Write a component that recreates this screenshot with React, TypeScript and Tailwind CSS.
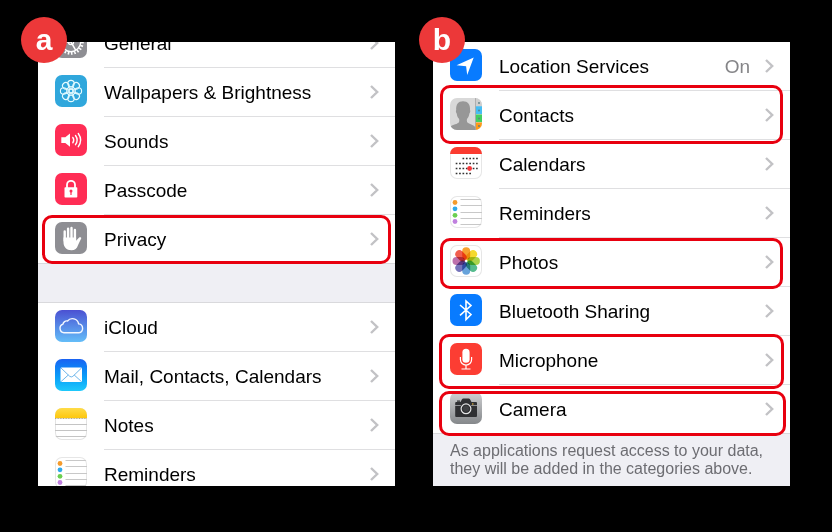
import type { ReactNode } from "react";

type Item = {
  label: string;
  icon: ReactNode;
  value?: string;
  highlight?: string;
};

function Tile({ className, children }: { className: string; children?: ReactNode }) {
  return (
    <span className={`block size-8 shrink-0 overflow-hidden rounded-[7px] ${className}`}>
      <svg viewBox="0 0 32 32" className="block size-full" aria-hidden="true">
        {children}
      </svg>
    </span>
  );
}

const eighths = [0, 45, 90, 135, 180, 225, 270, 315];

function GearIcon() {
  return (
    <Tile className="bg-[#8e8e93]">
      <g fill="none" stroke="#fff">
        <circle cx="16" cy="16" r="11.4" strokeWidth="2.8" strokeDasharray="1.500 1.755" />
        <circle cx="16" cy="16" r="9.700" strokeWidth="1.400" />
        <path d="M16 16h-9.500M16 16l4.800-8.300M16 16l4.800 8.300" strokeWidth="1.500" />
        <circle cx="16" cy="16" r="2.600" strokeWidth="1.200" />
      </g>
    </Tile>
  );
}

function WallpaperIcon() {
  return (
    <Tile className="bg-[#30a7dc]">
      <g fill="none" stroke="#e4fbff" strokeWidth="1.1">
        {eighths.map((a) => (
          <g key={a} transform={`rotate(${a} 16 16)`}>
            <circle cx="16" cy="8.600" r="3.200" />
            <path d="M16 14.200l-1.700-3M16 14.200l1.700-3" strokeWidth="0.900" />
          </g>
        ))}
        <circle cx="16" cy="16" r="1.900" />
      </g>
    </Tile>
  );
}

function SoundsIcon() {
  return (
    <Tile className="bg-[#ff2d55]">
      <path d="M6.300 13.200h4L15 9.500v13.200l-4.700-3.700h-4z" fill="#fff" />
      <g fill="none" stroke="#fff" strokeLinecap="round">
        <path d="M17.800 13.400q1.900 2.700 0 5.400" strokeWidth="1.400" />
        <path d="M20.500 11.500q3.300 4.600 0 9.200" strokeWidth="1.400" />
        <path d="M23.300 9.500q4.700 6.600 0 13.200" strokeWidth="1.400" />
      </g>
    </Tile>
  );
}

function PasscodeIcon() {
  return (
    <Tile className="bg-[#ff2d55]">
      <path d="M12 15v-3.200a4 4 0 0 1 8 0V15" fill="none" stroke="#fff" strokeWidth="1.800" />
      <rect x="9.500" y="14.300" width="12.800" height="10.300" rx="0.800" fill="#fff" />
      <circle cx="16" cy="18" r="1.500" fill="#ff2d55" />
      <path d="M15.400 18h1.200v4h-1.200z" fill="#ff2d55" />
    </Tile>
  );
}

function HandIcon() {
  return (
    <Tile className="bg-[#8e8e93]">
      <g stroke="#fff" strokeLinecap="round" fill="none">
        <path d="M9.700 9.500v9M13.100 6.800V17M16.500 6v11M19.900 8v10" strokeWidth="2.400" />
      </g>
      <path
        d="M8.500 15.500h12.600v3.300l2.800-3.100c1-1 2.700-.4 2.300.8-.9 2.200-2.200 4.200-3.200 6.700-1.100 3.200-3 5-6.600 5-4.900 0-7.900-3.400-7.900-8z"
        fill="#fff"
      />
    </Tile>
  );
}

function CloudIcon() {
  return (
    <Tile className="bg-linear-to-b from-[#4b50d2] to-[#64bdf8]">
      <path
        d="M9 22.800a4.500 4.500 0 0 1-1-8.700 3.700 3.700 0 0 1 4.500-3.100 6.300 6.300 0 0 1 11.100 2.900 4.500 4.500 0 0 1 .3 8.900z"
        fill="none"
        stroke="#f2f7ff"
        strokeWidth="1.400"
      />
    </Tile>
  );
}

function MailIcon() {
  return (
    <Tile className="bg-linear-to-b from-[#1a62f2] to-[#1fc9fb]">
      <rect x="5.500" y="8.500" width="21.500" height="14.500" rx="1.200" fill="#fff" />
      <g fill="none" stroke="#5eaee8" strokeWidth="0.900">
        <path d="M6 9l8.700 8.300q1.600 1.300 3.200 0L26.500 9" />
        <path d="M6 22.600l7.300-6.600M26.500 22.600L19.200 16" />
      </g>
    </Tile>
  );
}

function NotesIcon() {
  return (
    <Tile className="bg-white shadow-[inset_0_0_0_1px_#e3e3e3]">
      <defs>
        <linearGradient id="notes-band" x2="0" y2="1">
          <stop offset="0" stopColor="#ffdc48" />
          <stop offset="1" stopColor="#fdc70e" />
        </linearGradient>
      </defs>
      <path d="M0 0h32v10H0z" fill="url(#notes-band)" />
      <path d="M0 10.500h32" stroke="#b5a97e" strokeDasharray="1 0.600" />
      <path d="M0 16.500h32M0 22.500h32M0 28.500h32" stroke="#c4c4c4" />
    </Tile>
  );
}

function RemindersIcon() {
  return (
    <Tile className="bg-white shadow-[inset_0_0_0_1px_#e6e6e6]">
      <path d="M10.500 3.500H32M10.500 9.500H32M10.500 16.500H32M10.500 22.500H32M10.500 28.500H32" stroke="#c8c8c8" />
      <circle cx="5" cy="6.500" r="2.400" fill="#f49b2c" />
      <circle cx="5" cy="12.800" r="2.400" fill="#30a9ea" />
      <circle cx="5" cy="19.300" r="2.400" fill="#6bcf50" />
      <circle cx="5" cy="25.500" r="2.400" fill="#c080df" />
    </Tile>
  );
}

function LocationIcon() {
  return (
    <Tile className="bg-[#087bff]">
      <path d="M23.700 8.600L17.200 26l-1.100-8.700-9.500-1z" fill="#fff" />
    </Tile>
  );
}

function ContactsIcon() {
  return (
    <Tile className="bg-[#d9d9d9]">
      <path d="M25.500 0H32v8h-6.500z" fill="#cfcfcf" />
      <path d="M25.500 8.300H32v7.700h-6.500z" fill="#45bdf3" />
      <path d="M25.500 16.500H32V24h-6.500z" fill="#42cf61" />
      <path d="M25.500 24.500H32V32h-6.500z" fill="#ff9a17" />
      <path d="M25.500 0v32" stroke="#a5a5a5" strokeWidth="0.800" />
      <g fill="#5d7f82">
        <circle cx="29" cy="5" r="0.900" />
        <circle cx="29" cy="12.500" r="0.900" />
        <circle cx="29" cy="20.500" r="0.900" />
        <circle cx="29" cy="28" r="0.900" />
      </g>
      <path
        d="M0 32v-2.600c1.200-2.600 6.300-2.900 8.500-4.700.9-.8 1-2.600.5-4-1.400-1.300-2-3-2.200-5-.9-1-1.200-2.700-.6-3.600C5.800 6.500 8.300 3.200 13 3.200s7.500 3.100 7 8.800c.6 1 .2 2.700-.7 3.700-.2 2-.9 3.700-2.200 5-.5 1.400-.3 3.200.6 4 2.200 1.700 6.400 2 7.600 4.500V32z"
        fill="#979797"
      />
    </Tile>
  );
}

function CalendarIcon() {
  return (
    <Tile className="bg-white shadow-[inset_0_0_0_1px_#e6e6e6]">
      <path d="M0 0h32v7H0z" fill="#fb3b30" />
      <g stroke="#333" strokeWidth="1.700" strokeDasharray="1.700 1.700">
        <path d="M12.500 11.500h15.300" />
        <path d="M5.700 16.500h22" />
        <path d="M5.700 21.500h22" />
        <path d="M5.700 26.500h15.300" />
      </g>
      <circle cx="19.600" cy="21.500" r="2.400" fill="#f5383a" />
    </Tile>
  );
}

const petals = ["#f79a1e", "#f3d61c", "#a4cf3a", "#46b583", "#5a9bd8", "#6a68b5", "#b865a5", "#f0503f"];

function PhotosIcon() {
  return (
    <Tile className="bg-white shadow-[inset_0_0_0_1px_#e6e6e6]">
      {petals.map((fill, i) => (
        <rect
          key={fill}
          x="12.200"
          y="2.300"
          width="8"
          height="12.500"
          rx="4"
          fill={fill}
          className="mix-blend-multiply"
          opacity="0.920"
          transform={`rotate(${i * 45} 16.200 16)`}
        />
      ))}
    </Tile>
  );
}

function BluetoothIcon() {
  return (
    <Tile className="bg-[#087bff]">
      <path d="M10 11l11 9.500-5 5V7l5 4.600L10 21.300" fill="none" stroke="#fff" strokeWidth="1.600" />
    </Tile>
  );
}

function MicrophoneIcon() {
  return (
    <Tile className="bg-[#fc3d33]">
      <rect x="12.400" y="5.800" width="7.200" height="14" rx="3.600" fill="#fff" />
      <path d="M10.400 14v2.500a5.600 5.600 0 0 0 11.200 0V14M16 22.200v3.500M11.500 26h9" fill="none" stroke="#fff" strokeWidth="1.200" />
    </Tile>
  );
}

function CameraIcon() {
  return (
    <Tile className="bg-linear-to-b from-[#d0d1d3] to-[#85888b]">
      <g transform="translate(0 2)">
        <path d="M7 6.500h3v1.200H7z" fill="#2f3033" />
        <path d="M5.200 9q0-1 1-1h4.300l1.500-2.700q.5-.8 1.300-.8h5.400q.9 0 1.300.8L21.500 8H26q1 0 1 1v2H5.200z" fill="#2f3033" />
        <path d="M5.200 11.800H27V22q0 1-1 1H6.200q-1 0-1-1z" fill="#2f3033" />
        <circle cx="16" cy="14.800" r="6.200" fill="#2f3033" />
        <circle cx="16" cy="14.800" r="4.900" fill="none" stroke="#e4e5e6" strokeWidth="1.200" />
        <circle cx="16" cy="14.800" r="3" fill="#3f4144" />
        <circle cx="22.800" cy="10" r="0.800" fill="#e8b53a" />
      </g>
    </Tile>
  );
}

function Chevron() {
  return (
    <svg viewBox="0 0 9 14" className="h-3.5 w-[9px] shrink-0" aria-hidden="true">
      <path d="M1 1l6.200 6L1 13" fill="none" stroke="#c2c2c5" strokeWidth="2.400" />
    </svg>
  );
}

function Row({ item, last }: { item: Item; last: boolean }) {
  return (
    <li className="relative">
      <button
        type="button"
        className={`flex h-[49px] w-full items-start gap-[17px] pl-[17px] text-left ${last ? "border-b border-[#d9d9dc]" : ""}`}
      >
        <span className="pt-[7px]">{item.icon}</span>
        <span
          className={`flex min-w-0 flex-1 items-center self-stretch pr-4 ${last ? "" : "border-b border-[#dfdfe1]"}`}
        >
          <span className="flex-1 truncate pt-0.5 text-[19px] leading-7 text-black">{item.label}</span>
          {item.value && <span className="mr-[15px] pt-0.5 text-[19px] leading-7 text-[#858588]">{item.value}</span>}
          <Chevron />
        </span>
      </button>
      {item.highlight && (
        <span
          className={`pointer-events-none absolute z-10 rounded-[10px] border-3 border-[#e8000f] ${item.highlight}`}
        />
      )}
    </li>
  );
}

function Group({ items, open = false }: { items: Item[]; open?: boolean }) {
  return (
    <ul className="bg-white">
      {items.map((item, i) => (
        <Row key={item.label} item={item} last={!open && i === items.length - 1} />
      ))}
    </ul>
  );
}

function Badge({ children }: { children: string }) {
  return (
    <span className="absolute -top-[25px] z-20 flex size-[46px] items-center justify-center rounded-full bg-[#ec3839] text-[30px] leading-none font-bold text-white">
      {children}
    </span>
  );
}

const general: Item[] = [
  { label: "General", icon: <GearIcon /> },
  { label: "Wallpapers & Brightness", icon: <WallpaperIcon /> },
  { label: "Sounds", icon: <SoundsIcon /> },
  { label: "Passcode", icon: <PasscodeIcon /> },
  { label: "Privacy", icon: <HandIcon />, highlight: "inset-x-1 inset-y-0" },
];

const accounts: Item[] = [
  { label: "iCloud", icon: <CloudIcon /> },
  { label: "Mail, Contacts, Calendars", icon: <MailIcon /> },
  { label: "Notes", icon: <NotesIcon /> },
  { label: "Reminders", icon: <RemindersIcon /> },
];

const privacy: Item[] = [
  { label: "Location Services", icon: <LocationIcon />, value: "On" },
  { label: "Contacts", icon: <ContactsIcon />, highlight: "inset-x-[7px] -top-1.5 -bottom-1" },
  { label: "Calendars", icon: <CalendarIcon /> },
  { label: "Reminders", icon: <RemindersIcon /> },
  { label: "Photos", icon: <PhotosIcon />, highlight: "inset-x-[7px] top-0 -bottom-0.5" },
  { label: "Bluetooth Sharing", icon: <BluetoothIcon /> },
  { label: "Microphone", icon: <MicrophoneIcon />, highlight: "inset-x-1.5 -top-0.5 -bottom-1" },
  { label: "Camera", icon: <CameraIcon />, highlight: "right-1 left-1.5 top-1.5 -bottom-0.5" },
];

export default function App() {
  return (
    <main className="flex min-h-screen items-start gap-[38px] bg-black pt-[42px] pr-[42px] pb-[46px] pl-[38px] font-['Liberation_Sans',Arial,sans-serif]">
      <section className="relative min-w-0 flex-1" aria-label="Settings">
        <div className="-ml-[17px]">
          <Badge>a</Badge>
        </div>
        <div className="h-[444px] overflow-hidden bg-[#efeff4]">
          <div className="-mt-[23px]">
            <Group items={general} />
            <div className="h-[39px] border-b border-[#d9d9dc]" />
            <Group items={accounts} open />
          </div>
        </div>
      </section>

      <section className="relative min-w-0 flex-1" aria-label="Privacy">
        <div className="-ml-[14px]">
          <Badge>b</Badge>
        </div>
        <div className="bg-[#efeff4]">
          <Group items={privacy} />
          <p className="px-[17px] pt-2 pb-2 text-base leading-[18px] text-[#6d6d72]">
            As applications request access to your data, they will be added in the categories above.
          </p>
        </div>
      </section>
    </main>
  );
}
